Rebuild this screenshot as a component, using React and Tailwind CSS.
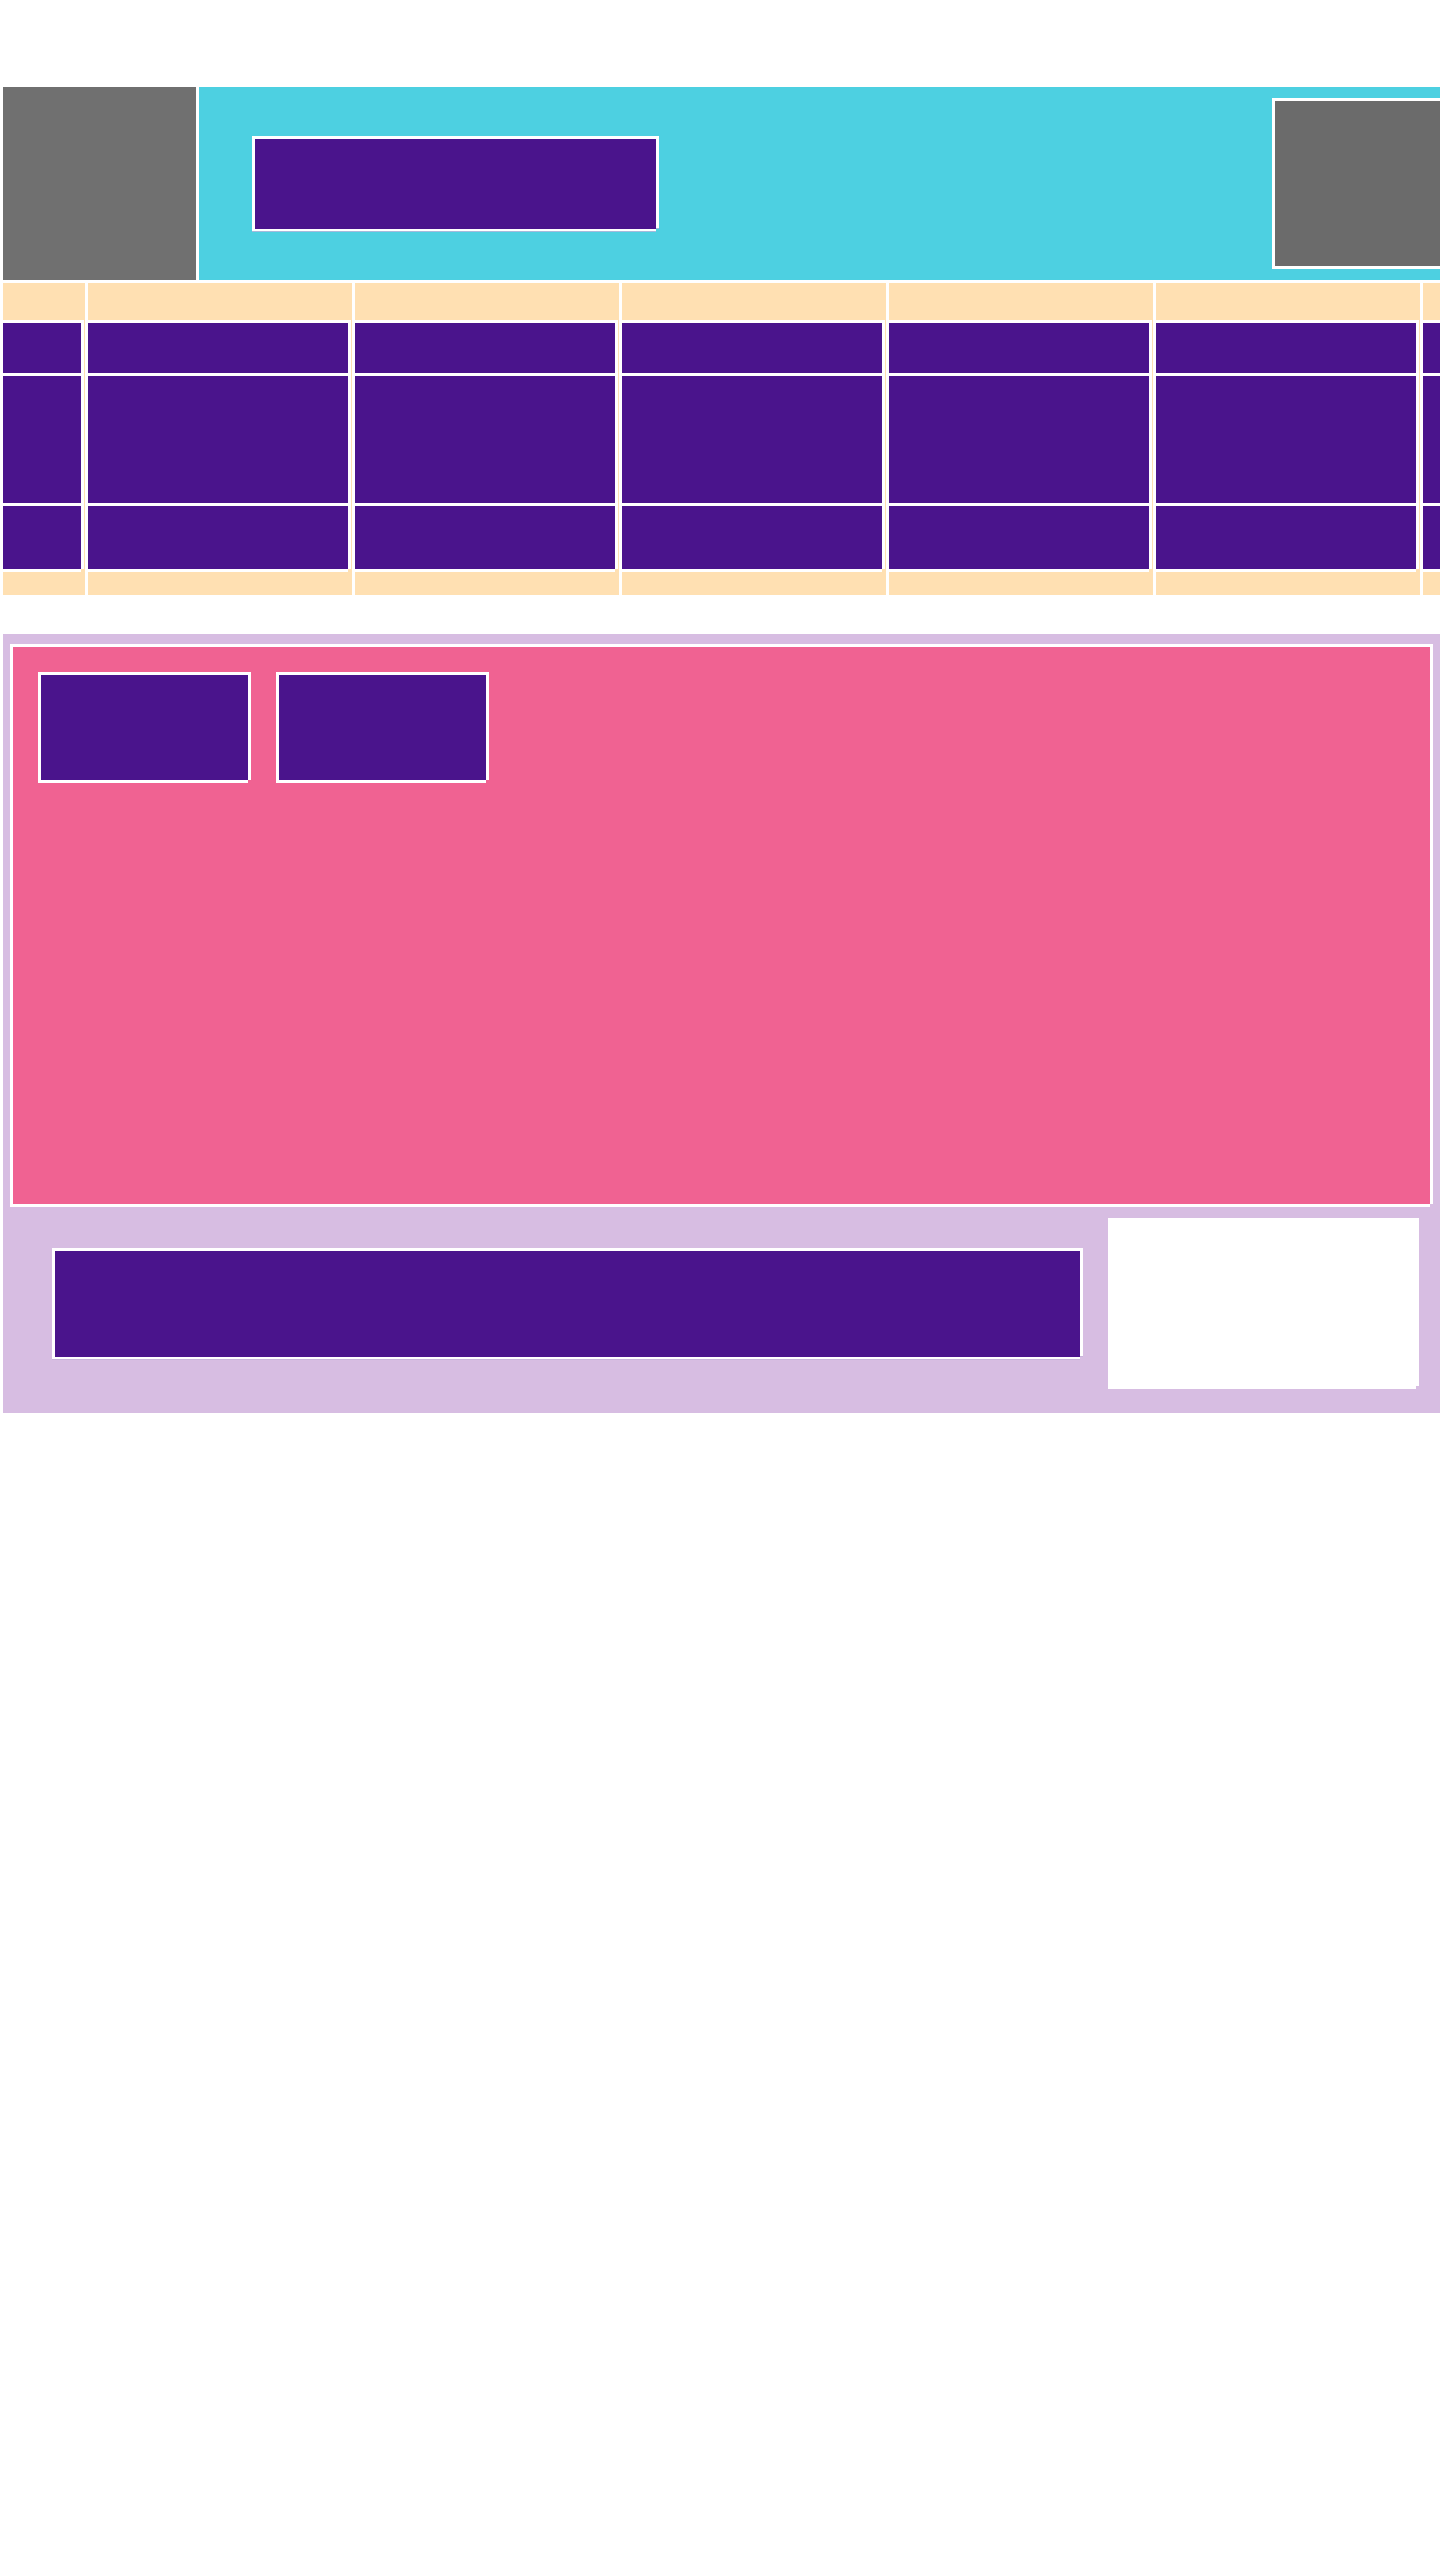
const NOTCH =
  "[clip-path:polygon(0_0,100%_0,100%_calc(100%_-_3px),calc(100%_-_3px)_calc(100%_-_3px),calc(100%_-_3px)_100%,0_100%)]";

function Column({ width, last }) {
  return (
    <div className={`shrink-0 bg-[#ffe0b2] pt-[37px] pb-[23px] ${width}`}>
      <div className={`mr-[1px] border-t-[3px] border-white ${NOTCH}`}>
        <div className="h-[53px] border-r-[3px] border-b-[3px] border-white bg-[#4a148c]" />
        <div className="h-[130px] border-r-[3px] border-b-[3px] border-white bg-[#4a148c]" />
        <div className="h-[66px] border-r-[3px] border-b-[3px] border-white bg-[#4a148c]" />
      </div>
    </div>
  );
}

export default function App() {
  const cols = ["w-[264px]", "w-[264px]", "w-[264px]", "w-[264px]", "w-[264px]", "w-[264px]"];
  return (
    <div className="min-h-[2560px] w-[1440px] overflow-hidden bg-white font-['Liberation_Sans',sans-serif]">
      {/* Header */}
      <div className="flex gap-[3px] pl-[3px] pt-[87px]">
        <div className="h-[193px] w-[193px] shrink-0 bg-[#707070]" />
        <div className="flex h-[193px] flex-1 items-center overflow-hidden bg-[#4dd0e1] pl-[53px]">
          <div className={`h-[96px] w-[407px] shrink-0 border-[3px] border-white bg-[#4a148c] ${NOTCH}`} />
          <div className="ml-[613px] h-[171px] w-[200px] shrink-0 border-[3px] border-white bg-[#6b6b6b]" />
        </div>
      </div>

      {/* Table */}
      <div className="mt-[3px] flex gap-[3px] overflow-hidden pl-[3px]">
        <Column width="w-[82px]" />
        {cols.map((w, i) => (
          <Column key={i} width={w} />
        ))}
      </div>

      {/* Lavender section */}
      <div className="ml-[3px] mt-[39px] bg-[#d7bde2] px-[7px] pt-[10px]">
        <div className={`flex h-[563px] items-start gap-[25px] border-[3px] border-white bg-[#f06292] p-[25px] ${NOTCH}`}>
          <div className={`h-[111px] w-[213px] border-[3px] border-white bg-[#4a148c] ${NOTCH}`} />
          <div className={`h-[111px] w-[213px] border-[3px] border-white bg-[#4a148c] ${NOTCH}`} />
        </div>
        <div className="flex items-center gap-[25px] pb-[24px] pl-[42px] pr-[14px] pt-[11px]">
          <div className={`h-[112px] flex-1 border-[3px] border-white bg-[#4a148c] ${NOTCH}`} />
          <div className={`h-[171px] w-[311px] shrink-0 bg-white ${NOTCH}`} />
        </div>
      </div>
    </div>
  );
}
